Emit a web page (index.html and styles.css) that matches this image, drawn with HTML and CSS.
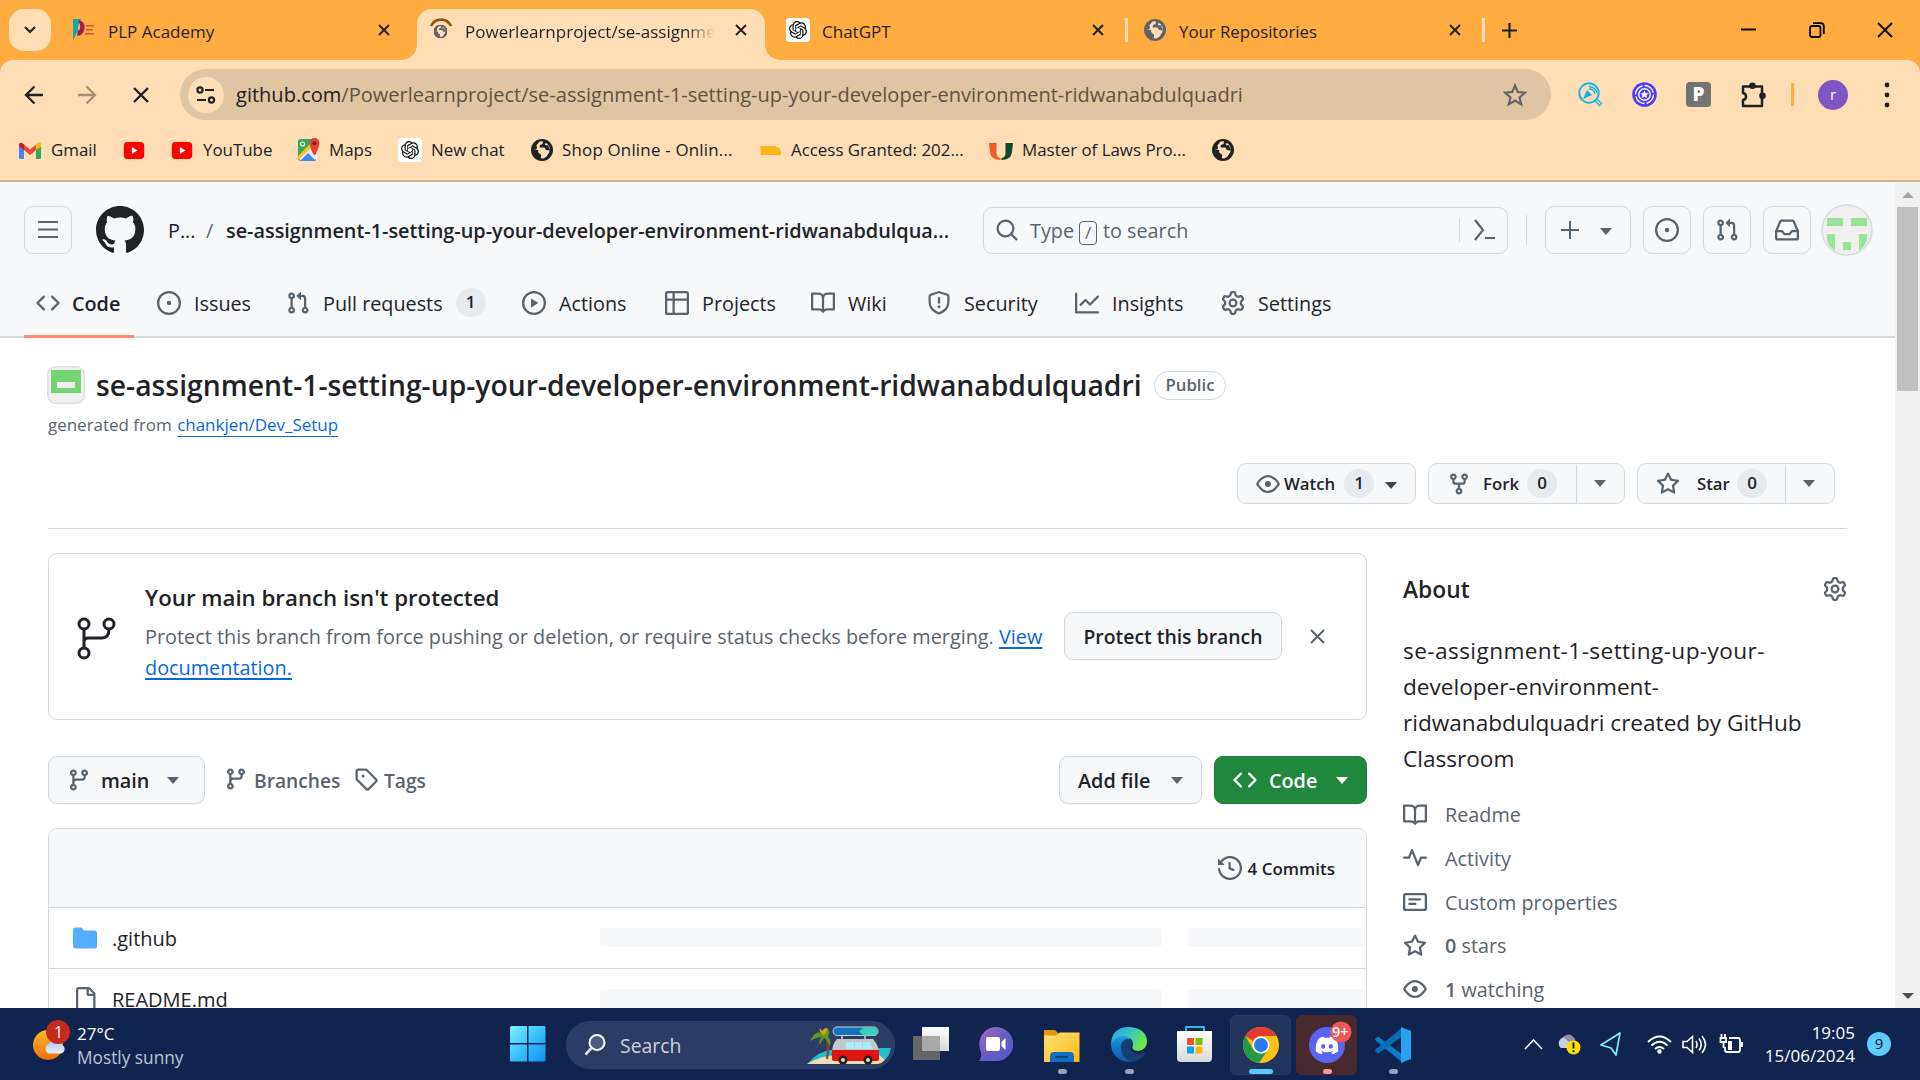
FILE: index.html
```html
<!DOCTYPE html>
<html lang="en">
<head>
<meta charset="utf-8">
<title>Powerlearnproject/se-assignment-1</title>
<link rel="stylesheet" href="styles.css">
</head>
<body>
<svg class="defs" aria-hidden="true">
  <defs>
    <linearGradient id="g-win" x1="0" y1="0" x2="1" y2="1"><stop offset="0" stop-color="#7df3fd"/><stop offset=".5" stop-color="#3cc1fb"/><stop offset="1" stop-color="#0d8ef5"/></linearGradient>
    <linearGradient id="g-sun" x1="0" y1="0" x2="0" y2="1"><stop offset="0" stop-color="#fbbc2a"/><stop offset="1" stop-color="#f06a0b"/></linearGradient>
    <linearGradient id="g-cloud" x1="0" y1="0" x2="0" y2="1"><stop offset="0" stop-color="#a9c5f2"/><stop offset="1" stop-color="#e4eefc"/></linearGradient>
    <linearGradient id="g-chat" x1="0" y1="0" x2="1" y2="1"><stop offset="0" stop-color="#a06ab8"/><stop offset=".5" stop-color="#6a5cc4"/><stop offset="1" stop-color="#5059c9"/></linearGradient>
    <linearGradient id="g-folder" x1="0" y1="0" x2="1" y2="1"><stop offset="0" stop-color="#ffe27a"/><stop offset="1" stop-color="#fdb913"/></linearGradient>
    <linearGradient id="g-edge" x1="0" y1="0" x2="1" y2=".4"><stop offset="0" stop-color="#2aa7e8"/><stop offset=".5" stop-color="#35c1c9"/><stop offset="1" stop-color="#6be94a"/></linearGradient>
    <linearGradient id="g-edge2" x1="0" y1="0" x2="0" y2="1"><stop offset="0" stop-color="#1b9de2"/><stop offset="1" stop-color="#0c56a5"/></linearGradient>
    <linearGradient id="g-bag" x1="0" y1="0" x2="0" y2="1"><stop offset="0" stop-color="#fff"/><stop offset="1" stop-color="#d8d8d8"/></linearGradient>
  </defs>
  <symbol id="i-code" viewBox="0 0 16 16"><path d="m11.28 3.22 4.25 4.25a.75.75 0 0 1 0 1.06l-4.25 4.25a.749.749 0 0 1-1.275-.326.749.749 0 0 1 .215-.734L13.94 8l-3.72-3.72a.749.749 0 0 1 .326-1.275.749.749 0 0 1 .734.215Zm-6.56 0a.751.751 0 0 1 1.042.018.751.751 0 0 1 .018 1.042L2.06 8l3.72 3.72a.749.749 0 0 1-.326 1.275.749.749 0 0 1-.734-.215L.47 8.53a.75.75 0 0 1 0-1.06Z"/></symbol>
  <symbol id="i-issue" viewBox="0 0 16 16"><path d="M8 9.5a1.5 1.5 0 1 0 0-3 1.5 1.5 0 0 0 0 3Z"/><path d="M8 0a8 8 0 1 1 0 16A8 8 0 0 1 8 0ZM1.5 8a6.5 6.5 0 1 0 13 0 6.5 6.5 0 0 0-13 0Z"/></symbol>
  <symbol id="i-pr" viewBox="0 0 16 16"><path d="M1.5 3.25a2.25 2.25 0 1 1 3 2.122v5.256a2.251 2.251 0 1 1-1.5 0V5.372A2.25 2.25 0 0 1 1.5 3.25Zm5.677-.177L9.573.677A.25.25 0 0 1 10 .854V2.5h1A2.5 2.5 0 0 1 13.5 5v5.628a2.251 2.251 0 1 1-1.5 0V5a1 1 0 0 0-1-1h-1v1.646a.25.25 0 0 1-.427.177L7.177 3.427a.25.25 0 0 1 0-.354ZM3.75 2.5a.75.75 0 1 0 0 1.5.75.75 0 0 0 0-1.5Zm0 9.5a.75.75 0 1 0 0 1.5.75.75 0 0 0 0-1.5Zm8.25.75a.75.75 0 1 0 1.5 0 .75.75 0 0 0-1.5 0Z"/></symbol>
  <symbol id="i-play" viewBox="0 0 16 16"><path d="M8 0a8 8 0 1 1 0 16A8 8 0 0 1 8 0ZM1.5 8a6.5 6.5 0 1 0 13 0 6.5 6.5 0 0 0-13 0Zm4.879-2.773 4.264 2.559a.25.25 0 0 1 0 .428l-4.264 2.559A.25.25 0 0 1 6 10.559V5.442a.25.25 0 0 1 .379-.215Z"/></symbol>
  <symbol id="i-table" viewBox="0 0 16 16"><path d="M0 1.75C0 .784.784 0 1.75 0h12.5C15.216 0 16 .784 16 1.75v12.5A1.75 1.75 0 0 1 14.25 16H1.75A1.75 1.75 0 0 1 0 14.25ZM6.5 6.5v8h7.75a.25.25 0 0 0 .25-.25V6.5Zm8-1.5V1.75a.25.25 0 0 0-.25-.25H6.5V5Zm-13 1.5v7.75c0 .138.112.25.25.25H5v-8ZM5 5V1.5H1.75a.25.25 0 0 0-.25.25V5Z"/></symbol>
  <symbol id="i-book" viewBox="0 0 16 16"><path d="M0 1.75A.75.75 0 0 1 .75 1h4.253c1.227 0 2.317.59 3 1.501A3.743 3.743 0 0 1 11.006 1h4.245a.75.75 0 0 1 .75.75v10.5a.75.75 0 0 1-.75.75h-4.507a2.25 2.25 0 0 0-1.591.659l-.622.621a.75.75 0 0 1-1.06 0l-.622-.621A2.25 2.25 0 0 0 5.258 13H.75a.75.75 0 0 1-.75-.75Zm7.251 10.324.004-5.073-.002-2.253A2.25 2.25 0 0 0 5.003 2.5H1.5v9h3.757a3.75 3.75 0 0 1 1.994.574ZM8.755 4.75l-.004 7.322a3.752 3.752 0 0 1 1.992-.572H14.5v-9h-3.495a2.25 2.25 0 0 0-2.25 2.25Z"/></symbol>
  <symbol id="i-shield" viewBox="0 0 16 16"><path d="M7.467.133a1.748 1.748 0 0 1 1.066 0l5.25 1.68A1.75 1.75 0 0 1 15 3.48V7c0 1.566-.32 3.182-1.303 4.682-.983 1.498-2.585 2.813-5.032 3.855a1.697 1.697 0 0 1-1.33 0c-2.447-1.042-4.049-2.357-5.032-3.855C1.32 10.182 1 8.566 1 7V3.48a1.755 1.755 0 0 1 1.217-1.667Zm.61 1.429a.25.25 0 0 0-.153 0l-5.25 1.68a.25.25 0 0 0-.174.238V7c0 1.358.275 2.666 1.057 3.86.784 1.194 2.121 2.34 4.366 3.297a.196.196 0 0 0 .154 0c2.245-.956 3.582-2.104 4.366-3.298C13.225 9.666 13.5 8.36 13.5 7V3.48a.251.251 0 0 0-.174-.237l-5.25-1.68ZM8.75 4.75v3a.75.75 0 0 1-1.5 0v-3a.75.75 0 0 1 1.5 0ZM9 10.5a1 1 0 1 1-2 0 1 1 0 0 1 2 0Z"/></symbol>
  <symbol id="i-graph" viewBox="0 0 16 16"><path d="M1.5 1.75V13.5h13.75a.75.75 0 0 1 0 1.5H.75a.75.75 0 0 1-.75-.75V1.75a.75.75 0 0 1 1.5 0Zm14.28 2.53-5.25 5.25a.75.75 0 0 1-1.06 0L7 7.06 4.28 9.78a.751.751 0 0 1-1.042-.018.751.751 0 0 1-.018-1.042l3.25-3.25a.75.75 0 0 1 1.06 0L10 7.94l4.72-4.72a.751.751 0 0 1 1.042.018.751.751 0 0 1 .018 1.042Z"/></symbol>
  <symbol id="i-gear" viewBox="0 0 16 16"><path d="M8 0a8.2 8.2 0 0 1 .701.031C9.444.095 9.99.645 10.16 1.29l.288 1.107c.018.066.079.158.212.224.231.114.454.243.668.386.123.082.233.09.299.071l1.103-.303c.644-.176 1.392.021 1.82.63.27.385.506.792.704 1.218.315.675.111 1.422-.364 1.891l-.814.806c-.049.048-.098.147-.088.294.016.257.016.515 0 .772-.01.147.038.246.088.294l.814.806c.475.469.679 1.216.364 1.891a7.977 7.977 0 0 1-.704 1.217c-.428.61-1.176.807-1.82.63l-1.102-.302c-.067-.019-.177-.011-.3.071a5.909 5.909 0 0 1-.668.386c-.133.066-.194.158-.211.224l-.29 1.106c-.168.646-.715 1.196-1.458 1.26a8.006 8.006 0 0 1-1.402 0c-.743-.064-1.289-.614-1.458-1.26l-.289-1.106c-.018-.066-.079-.158-.212-.224a5.738 5.738 0 0 1-.668-.386c-.123-.082-.233-.09-.299-.071l-1.103.303c-.644.176-1.392-.021-1.82-.63a8.12 8.12 0 0 1-.704-1.218c-.315-.675-.111-1.422.363-1.891l.815-.806c.05-.048.098-.147.088-.294a6.214 6.214 0 0 1 0-.772c.01-.147-.038-.246-.088-.294l-.815-.806C.635 6.045.431 5.298.746 4.623a7.92 7.92 0 0 1 .704-1.217c.428-.61 1.176-.807 1.82-.63l1.102.302c.067.019.177.011.3-.071.214-.143.437-.272.668-.386.133-.066.194-.158.211-.224l.29-1.106C6.009.645 6.556.095 7.299.03 7.53.01 7.764 0 8 0Zm-.571 1.525c-.036.003-.108.036-.137.146l-.289 1.105c-.147.561-.549.967-.998 1.189-.173.086-.34.183-.5.29-.417.278-.97.423-1.529.27l-1.103-.303c-.109-.03-.175.016-.195.045-.22.312-.412.644-.573.99-.014.031-.021.11.059.19l.815.806c.411.406.562.957.53 1.456a4.709 4.709 0 0 0 0 .582c.032.499-.119 1.05-.53 1.456l-.815.806c-.081.08-.073.159-.059.19.162.346.353.677.573.989.02.03.085.076.195.046l1.102-.303c.56-.153 1.113-.008 1.53.27.161.107.328.204.501.29.447.222.85.629.997 1.189l.289 1.105c.029.109.101.143.137.146a6.6 6.6 0 0 0 1.142 0c.036-.003.108-.036.137-.146l.289-1.105c.147-.561.549-.967.998-1.189.173-.086.34-.183.5-.29.417-.278.97-.423 1.529-.27l1.103.303c.109.029.175-.016.195-.045.22-.313.411-.644.573-.99.014-.031.021-.11-.059-.19l-.815-.806c-.411-.406-.562-.957-.53-1.456a4.709 4.709 0 0 0 0-.582c-.032-.499.119-1.05.53-1.456l.815-.806c.081-.08.073-.159.059-.19a6.464 6.464 0 0 0-.573-.989c-.02-.03-.085-.076-.195-.046l-1.102.303c-.56.153-1.113.008-1.53-.27a4.44 4.44 0 0 0-.501-.29c-.447-.222-.85-.629-.997-1.189l-.289-1.105c-.029-.11-.101-.143-.137-.146a6.6 6.6 0 0 0-1.142 0ZM11 8a3 3 0 1 1-6 0 3 3 0 0 1 6 0ZM9.5 8a1.5 1.5 0 1 0-3.001.001A1.5 1.5 0 0 0 9.5 8Z"/></symbol>
  <symbol id="i-fork" viewBox="0 0 16 16"><path d="M5 5.372v.878c0 .414.336.75.75.75h4.5a.75.75 0 0 0 .75-.75v-.878a2.25 2.25 0 1 1 1.5 0v.878a2.25 2.25 0 0 1-2.25 2.25h-1.5v2.128a2.251 2.251 0 1 1-1.5 0V8.5h-1.5A2.25 2.25 0 0 1 3.5 6.25v-.878a2.25 2.25 0 1 1 1.5 0ZM5 3.25a.75.75 0 1 0-1.5 0 .75.75 0 0 0 1.5 0Zm6.75.75a.75.75 0 1 0 0-1.5.75.75 0 0 0 0 1.5Zm-3 8.75a.75.75 0 1 0-1.5 0 .75.75 0 0 0 1.5 0Z"/></symbol>
  <symbol id="i-star" viewBox="0 0 16 16"><path d="M8 .25a.75.75 0 0 1 .673.418l1.882 3.815 4.21.612a.75.75 0 0 1 .416 1.279l-3.046 2.97.719 4.192a.751.751 0 0 1-1.088.791L8 12.347l-3.766 1.98a.75.75 0 0 1-1.088-.79l.72-4.194L.818 6.374a.75.75 0 0 1 .416-1.28l4.21-.611L7.327.668A.75.75 0 0 1 8 .25Zm0 2.445L6.615 5.5a.75.75 0 0 1-.564.41l-3.097.45 2.24 2.184a.75.75 0 0 1 .216.664l-.528 3.084 2.769-1.456a.75.75 0 0 1 .698 0l2.77 1.456-.53-3.084a.75.75 0 0 1 .216-.664l2.24-2.183-3.096-.45a.75.75 0 0 1-.564-.41L8 2.694Z"/></symbol>
  <symbol id="i-eye" viewBox="0 0 16 16"><path d="M8 2c1.981 0 3.671.992 4.933 2.078 1.27 1.091 2.187 2.345 2.637 3.023a1.62 1.62 0 0 1 0 1.798c-.45.678-1.367 1.932-2.637 3.023C11.67 13.008 9.981 14 8 14c-1.981 0-3.671-.992-4.933-2.078C1.797 10.83.88 9.576.43 8.898a1.62 1.62 0 0 1 0-1.798c.45-.677 1.367-1.931 2.637-3.022C4.33 2.992 6.019 2 8 2ZM1.679 7.932a.12.12 0 0 0 0 .136c.411.622 1.241 1.75 2.366 2.717C5.176 11.758 6.527 12.5 8 12.5c1.473 0 2.825-.742 3.955-1.715 1.124-.967 1.954-2.096 2.366-2.717a.12.12 0 0 0 0-.136c-.412-.621-1.242-1.75-2.366-2.717C10.824 4.242 9.473 3.5 8 3.5c-1.473 0-2.825.742-3.955 1.715-1.124.967-1.954 2.096-2.366 2.717ZM8 10a2 2 0 1 1-.001-3.999A2 2 0 0 1 8 10Z"/></symbol>
  <symbol id="i-branch" viewBox="0 0 16 16"><path d="M9.5 3.25a2.25 2.25 0 1 1 3 2.122V6A2.5 2.5 0 0 1 10 8.5H6a1 1 0 0 0-1 1v1.128a2.251 2.251 0 1 1-1.5 0V5.372a2.25 2.25 0 1 1 1.5 0v1.836A2.493 2.493 0 0 1 6 7h4a1 1 0 0 0 1-1v-.628A2.25 2.25 0 0 1 9.5 3.25Zm-6 0a.75.75 0 1 0 1.5 0 .75.75 0 0 0-1.5 0Zm8.25-.75a.75.75 0 1 0 0 1.5.75.75 0 0 0 0-1.5ZM4.25 12a.75.75 0 1 0 0 1.5.75.75 0 0 0 0-1.5Z"/></symbol>
  <symbol id="i-tag" viewBox="0 0 16 16"><path d="M1 7.775V2.75C1 1.784 1.784 1 2.75 1h5.025c.464 0 .91.184 1.238.513l6.25 6.25a1.75 1.75 0 0 1 0 2.474l-5.026 5.026a1.75 1.75 0 0 1-2.474 0l-6.25-6.25A1.752 1.752 0 0 1 1 7.775Zm1.5 0c0 .066.026.13.073.177l6.25 6.25a.25.25 0 0 0 .354 0l5.025-5.025a.25.25 0 0 0 0-.354l-6.25-6.25a.25.25 0 0 0-.177-.073H2.75a.25.25 0 0 0-.25.25ZM6 5a1 1 0 1 1 0 2 1 1 0 0 1 0-2Z"/></symbol>
  <symbol id="i-history" viewBox="0 0 16 16"><path d="m.427 1.927 1.215 1.215a8.002 8.002 0 1 1-1.6 5.685.75.75 0 1 1 1.493-.154 6.5 6.5 0 1 0 1.18-4.458l1.358 1.358A.25.25 0 0 1 3.896 6H.25A.25.25 0 0 1 0 5.75V2.104a.25.25 0 0 1 .427-.177ZM7.75 4a.75.75 0 0 1 .75.75v2.992l2.028.812a.75.75 0 0 1-.557 1.392l-2.5-1A.751.751 0 0 1 7 8.25v-3.5A.75.75 0 0 1 7.75 4Z"/></symbol>
  <symbol id="i-file" viewBox="0 0 16 16"><path d="M2 1.75C2 .784 2.784 0 3.75 0h6.586c.464 0 .909.184 1.237.513l2.914 2.914c.329.328.513.773.513 1.237v9.586A1.75 1.75 0 0 1 13.25 16h-9.5A1.75 1.75 0 0 1 2 14.25Zm1.75-.25a.25.25 0 0 0-.25.25v12.5c0 .138.112.25.25.25h9.5a.25.25 0 0 0 .25-.25V6h-2.75A1.75 1.75 0 0 1 9 4.25V1.5Zm6.75.062V4.25c0 .138.112.25.25.25h2.688l-.011-.013-2.914-2.914-.013-.011Z"/></symbol>
  <symbol id="i-folder" viewBox="0 0 16 16"><path d="M1.75 1A1.75 1.75 0 0 0 0 2.75v10.5C0 14.216.784 15 1.75 15h12.5A1.75 1.75 0 0 0 16 13.25v-8.5A1.75 1.75 0 0 0 14.25 3H7.5a.25.25 0 0 1-.2-.1l-.9-1.2C6.07 1.26 5.55 1 5 1H1.75Z"/></symbol>
  <symbol id="i-pulse" viewBox="0 0 16 16"><path d="M6 2c.306 0 .582.187.696.471L10 10.731l1.304-3.26A.751.751 0 0 1 12 7h3.25a.75.75 0 0 1 0 1.5h-2.742l-1.812 4.528a.751.751 0 0 1-1.392 0L6 4.77 4.696 8.03A.75.75 0 0 1 4 8.5H.75a.75.75 0 0 1 0-1.5h2.742l1.812-4.529A.751.751 0 0 1 6 2Z"/></symbol>
  <symbol id="i-note" viewBox="0 0 16 16"><path d="M0 3.75C0 2.784.784 2 1.75 2h12.5c.966 0 1.75.784 1.75 1.75v8.5A1.75 1.75 0 0 1 14.25 14H1.75A1.75 1.75 0 0 1 0 12.25Zm1.75-.25a.25.25 0 0 0-.25.25v8.5c0 .138.112.25.25.25h12.5a.25.25 0 0 0 .25-.25v-8.5a.25.25 0 0 0-.25-.25ZM3.5 6.25a.75.75 0 0 1 .75-.75h7a.75.75 0 0 1 0 1.5h-7a.75.75 0 0 1-.75-.75Zm.75 2.25h4a.75.75 0 0 1 0 1.5h-4a.75.75 0 0 1 0-1.5Z"/></symbol>
  <symbol id="i-inbox" viewBox="0 0 16 16"><path d="M2.8 2.06A1.75 1.75 0 0 1 4.41 1h7.18c.7 0 1.333.417 1.61 1.06l2.74 6.395c.04.093.06.194.06.295v4.5A1.75 1.75 0 0 1 14.25 15H1.75A1.75 1.75 0 0 1 0 13.25v-4.5c0-.101.02-.202.06-.295Zm1.61.44a.25.25 0 0 0-.23.152L1.887 8H4.75a.75.75 0 0 1 .6.3L6.625 10h2.75l1.275-1.7a.75.75 0 0 1 .6-.3h2.863L11.82 2.652a.25.25 0 0 0-.23-.152Zm10.09 7h-2.875l-1.275 1.7a.75.75 0 0 1-.6.3h-3.5a.75.75 0 0 1-.6-.3L4.375 9.5H1.5v3.75c0 .138.112.25.25.25h12.5a.25.25 0 0 0 .25-.25Z"/></symbol>
  <symbol id="i-search" viewBox="0 0 16 16"><path d="M10.68 11.74a6 6 0 0 1-7.922-8.982 6 6 0 0 1 8.982 7.922l3.04 3.04a.749.749 0 0 1-.326 1.275.749.749 0 0 1-.734-.215ZM11.5 7a4.499 4.499 0 1 0-8.997 0A4.499 4.499 0 0 0 11.5 7Z"/></symbol>
  <symbol id="i-github" viewBox="0 0 16 16"><path d="M8 0c4.42 0 8 3.58 8 8a8.013 8.013 0 0 1-5.45 7.59c-.4.08-.55-.17-.55-.38 0-.27.01-1.13.01-2.2 0-.75-.25-1.23-.54-1.48 1.78-.2 3.65-.88 3.65-3.95 0-.88-.31-1.59-.82-2.15.08-.2.36-1.02-.08-2.12 0 0-.67-.22-2.2.82-.64-.18-1.32-.27-2-.27-.68 0-1.36.09-2 .27-1.53-1.03-2.2-.82-2.2-.82-.44 1.1-.16 1.92-.08 2.12-.51.56-.82 1.28-.82 2.15 0 3.06 1.86 3.75 3.64 3.95-.23.2-.44.55-.51 1.07-.46.21-1.61.55-2.33-.66-.15-.24-.6-.83-1.23-.82-.67.01-.27.38.01.53.34.19.73.9.82 1.13.16.45.68 1.31 2.69.94 0 .67.01 1.3.01 1.49 0 .21-.15.45-.55.38A7.995 7.995 0 0 1 0 8c0-4.42 3.58-8 8-8Z"/></symbol>
  <symbol id="i-openai" viewBox="-4 -4 32 32"><rect x="-4" y="-4" width="32" height="32" rx="5" fill="#fff"/><path fill="#111" d="M22.2819 9.8211a5.9847 5.9847 0 0 0-.5157-4.9108 6.0462 6.0462 0 0 0-6.5098-2.9A6.0651 6.0651 0 0 0 4.9807 4.1818a5.9847 5.9847 0 0 0-3.9977 2.9 6.0462 6.0462 0 0 0 .7427 7.0966 5.98 5.98 0 0 0 .511 4.9107 6.051 6.051 0 0 0 6.5146 2.9001A5.9847 5.9847 0 0 0 13.2599 24a6.0557 6.0557 0 0 0 5.7718-4.2058 5.9894 5.9894 0 0 0 3.9977-2.9001 6.0557 6.0557 0 0 0-.7475-7.0729zm-9.022 12.6081a4.4755 4.4755 0 0 1-2.8764-1.0408l.1419-.0804 4.7783-2.7582a.7948.7948 0 0 0 .3927-.6813v-6.7369l2.02 1.1686a.071.071 0 0 1 .038.052v5.5826a4.504 4.504 0 0 1-4.4945 4.4944zm-9.6607-4.1254a4.4708 4.4708 0 0 1-.5346-3.0137l.142.0852 4.783 2.7582a.7712.7712 0 0 0 .7806 0l5.8428-3.3685v2.3324a.0804.0804 0 0 1-.0332.0615L9.74 19.9502a4.4992 4.4992 0 0 1-6.1408-1.6464zM2.3408 7.8956a4.485 4.485 0 0 1 2.3655-1.9728V11.6a.7664.7664 0 0 0 .3879.6765l5.8144 3.3543-2.0201 1.1685a.0757.0757 0 0 1-.071 0l-4.8303-2.7865A4.504 4.504 0 0 1 2.3408 7.872zm16.5963 3.8558L13.1038 8.364 15.1192 7.2a.0757.0757 0 0 1 .071 0l4.8303 2.7913a4.4944 4.4944 0 0 1-.6765 8.1042v-5.6772a.79.79 0 0 0-.407-.667zm2.0107-3.0231l-.142-.0852-4.7735-2.7818a.7759.7759 0 0 0-.7854 0L9.409 9.2297V6.8974a.0662.0662 0 0 1 .0284-.0615l4.8303-2.7866a4.4992 4.4992 0 0 1 6.6802 4.66zM8.3065 12.863l-2.02-1.1638a.0804.0804 0 0 1-.038-.0567V6.0742a4.4992 4.4992 0 0 1 7.3757-3.4537l-.142.0805L8.704 5.459a.7948.7948 0 0 0-.3927.6813zm1.0976-2.3654l2.602-1.4998 2.6069 1.4998v2.9994l-2.5974 1.4997-2.6067-1.4997Z"/></symbol>
  <symbol id="i-globe" viewBox="0 0 22 22"><circle cx="11" cy="11" r="11"/><path class="land" d="M8.5 2.6 12 2.2 11.6 5 9 6l-.5 2.6h5L15 11l3.8.4c.2-3-1-5.6-3.2-7.2l-2 .4.8 1.6h2.6l1.6 4.2-.3 2.8-3 4.6-3 1.8-2.5-.4.4-3.4-3-2.2V11H2.4l3-.6L6 8.600 5.400 6.400Z"/></symbol>
  <symbol id="i-x" viewBox="0 0 12 12"><path d="M1 1l10 10M11 1L1 11" fill="none" stroke="currentColor" stroke-width="1.9"/></symbol>
  <symbol id="i-youtube" viewBox="0 0 24 20"><rect width="24" height="20" rx="4.500" fill="#f00"/><path d="M9.500 6v8l6.500-4z" fill="#fff"/></symbol>
</svg>

<header class="tabstrip">
  <button class="tab-search"><svg width="14" height="10" viewBox="0 0 14 10"><path d="M2 2l5 5 5-5" fill="none" stroke="#202124" stroke-width="2.200"/></svg></button>
  <div class="tab tab-plp">
    <svg class="fav" width="22" height="22" viewBox="0 0 22 22"><path d="M0 0h8L5 8v4L0 21z" fill="#14a8ad"/><path d="M5 1q7 1 6.500 8T4 17l1-5 2-2q1-4-2-9z" fill="#a3174f"/><path d="M13 6h8v1.500h-8zM13 10h7v1.500h-7zM12 14h9v1.500h-9z" fill="#d9503a"/></svg>
    <span class="label">PLP Academy</span><svg class="close"><use href="#i-x"/></svg>
  </div>
  <div class="tab tab-active">
    <svg class="fav" width="24" height="24" viewBox="0 0 24 24"><path d="M2 8a11 11 0 0 1 20 0" fill="none" stroke="#8a5710" stroke-width="2.600"/><svg class="globe-tab" x="4.500" y="6.500" width="14" height="14"><use href="#i-globe"/></svg></svg>
    <span class="label fade">Powerlearnproject/se-assignmen</span><svg class="close"><use href="#i-x"/></svg>
  </div>
  <div class="tab tab-gpt">
    <svg class="fav" width="24" height="24"><use href="#i-openai"/></svg>
    <span class="label">ChatGPT</span><svg class="close"><use href="#i-x"/></svg>
  </div>
  <i class="tab-sep"></i>
  <div class="tab tab-repos">
    <svg class="fav globe-grey" width="22" height="22"><use href="#i-globe"/></svg>
    <span class="label">Your Repositories</span><svg class="close"><use href="#i-x"/></svg>
  </div>
  <i class="tab-sep"></i>
  <svg class="new-tab" width="17" height="17" viewBox="0 0 17 17"><path d="M8.500 1v15M1 8.500h15" stroke="#202124" stroke-width="2.200"/></svg>
  <div class="win-ctrl">
    <svg width="16" height="16" viewBox="0 0 16 16"><path d="M0 7.500h15" stroke="#000" stroke-width="2"/></svg>
    <svg width="16" height="16" viewBox="0 0 16 16"><g fill="none" stroke="#000" stroke-width="1.800"><rect x="1" y="4" width="10.500" height="11" rx="2"/><path d="M4 1.200h7.500q3.300 0 3.300 3.300V12"/></g></svg>
    <svg width="16" height="16" viewBox="0 0 16 16"><path d="M1 1l14 14M15 1L1 15" stroke="#000" stroke-width="1.800"/></svg>
  </div>
</header>

<section class="chrome">
  <div class="toolbar">
    <svg width="20" height="20" viewBox="0 0 20 20"><path d="M19 10H2M10.500 1.500L2 10l8.500 8.500" fill="none" stroke="#202124" stroke-width="2.300"/></svg>
    <svg width="20" height="20" viewBox="0 0 20 20"><path d="M1 10h17M9.500 1.500L18 10l-8.500 8.500" fill="none" stroke="#a38f76" stroke-width="2.300"/></svg>
    <svg width="16" height="16" viewBox="0 0 16 16"><path d="M1 1l14 14M15 1L1 15" stroke="#202124" stroke-width="2.400"/></svg>
    <div class="omnibox">
      <span class="site-info"><svg width="20" height="18" viewBox="0 0 20 18"><g fill="none" stroke="#202124" stroke-width="2.200"><circle cx="4" cy="4" r="2.600"/><path d="M9 4h9M1 14h9"/><circle cx="15.500" cy="14" r="2.600"/></g></svg></span>
      <span class="url"><b>github.com</b>/Powerlearnproject/se-assignment-1-setting-up-your-developer-environment-ridwanabdulquadri</span>
      <svg width="24" height="24" viewBox="0 0 24 24"><path d="M12 2.500l2.800 6.600 7.200.6-5.500 4.700 1.700 7L12 17.600l-6.200 3.800 1.700-7L2 9.700l7.200-.6z" fill="none" stroke="#5f6368" stroke-width="2.100"/></svg>
    </div>
    <svg width="25" height="25" viewBox="0 0 25 25"><g fill="none" stroke="#17b7ee" stroke-width="2"><circle cx="11" cy="11" r="9.700"/><path d="M18 18l5 5" stroke-width="4"/><path d="M11 7q5 0 6 5M11 4.500q6 .5 8 6" stroke-width="1.300"/></g><path d="M9 8l5 5-9 4z" fill="#17a9e8"/><path d="M18.500 18.500l4 4" stroke="#ffdeb5" stroke-width="1.300"/></svg>
    <svg width="25" height="25" viewBox="0 0 25 25"><circle cx="12.500" cy="12.500" r="12.300" fill="#4d3dfb"/><g fill="none" stroke="#fff" stroke-width="1.400"><circle cx="12.500" cy="12.500" r="9" stroke-dasharray="12 2.100"/><circle cx="12.500" cy="12.500" r="5.800"/></g><path d="M12.500 8.500l1.200 2.600 2.800.3-2 1.900.6 2.700-2.600-1.300-2.600 1.300.6-2.700-2-1.900 2.800-.3z" fill="#fff"/></svg>
    <span class="ext-p">P</span>
    <svg width="26" height="26" viewBox="0 0 26 26"><path d="M2 4.500h19v19.500H2v-6q3-.5 3-3.500t-3-3.500z" fill="none" stroke="#202124" stroke-width="2.500" stroke-linejoin="round"/><circle cx="11.500" cy="3.800" r="3.300" fill="#202124"/><circle cx="21.500" cy="13.800" r="3.300" fill="#202124"/></svg>
    <i class="ext-sep"></i>
    <span class="profile">r</span>
    <svg width="6" height="26" viewBox="0 0 6 26"><g fill="#202124"><circle cx="3" cy="3" r="2.400"/><circle cx="3" cy="13" r="2.400"/><circle cx="3" cy="23" r="2.400"/></g></svg>
  </div>
  <nav class="bookmarks">
    <svg width="22" height="17" viewBox="0 0 22 17"><path d="M0 3v12.500Q0 17 1.500 17H5V7z" fill="#4285f4"/><path d="M22 3v12.500q0 1.500-1.500 1.500H17V7z" fill="#34a853"/><path d="M0 3.500Q0 0 3 1l8 6.500L19 1q3-1 3 2.500L17 8l-6 5-6-5z" fill="#ea4335"/><path d="M17 2.500L19 1q3-1 3 2.500v1.200L17 8z" fill="#fbbc04"/><path d="M0 3.500Q0 0 3 1l2 1.600V8L0 4z" fill="#c5221f"/></svg><span class="label">Gmail</span>
    <svg width="24" height="17"><use href="#i-youtube"/></svg>
    <svg width="24" height="17"><use href="#i-youtube"/></svg><span class="label">YouTube</span>
    <svg width="23" height="24" viewBox="0 0 23 24"><path d="M1 4q0-3 3-3h15v19q0 3-3 3H4q-3 0-3-3z" fill="#34a853"/><path d="M1 19L18 4l2 4v12L16 23H4z" fill="#f1f1ee"/><path d="M3 23l8-8 8 8z" fill="#4285f4"/><path d="M1 18L15 4l3 2.500L1.500 22z" fill="#fbc02d"/><path d="M17.500 0a5 5 0 0 1 5 5q0 3.500-4.200 12h-1.500Q12.500 9 12.500 5a5 5 0 0 1 5-5z" fill="#e04434"/><circle cx="17.500" cy="5.200" r="2" fill="#7d1a13"/><circle cx="5.500" cy="6" r="2" fill="none" stroke="#fff" stroke-width="1.200"/></svg><span class="label">Maps</span>
    <svg width="24" height="24"><use href="#i-openai"/></svg><span class="label">New chat</span>
    <svg class="globe-dark" width="22" height="22"><use href="#i-globe"/></svg><span class="label ls1">Shop Online - Onlin...</span>
    <svg width="21" height="9" viewBox="0 0 21 9"><path d="M0 0h14q6 1 7 5v4H1z" fill="#fbb61a"/></svg><span class="label">Access Granted: 202...</span>
    <svg class="u-logo" width="24" height="17" viewBox="0 0 24 17"><path d="M0 0h7.500v10q0 4.500 4 5V17Q2 17 1 9z" fill="#f05a28"/><path d="M24 0h-7.500v10q0 4.500-4 5V17Q22 17 23 9z" fill="#0b4a2e"/></svg><span class="label">Master of Laws Pro...</span>
    <svg class="globe-dark" width="22" height="22"><use href="#i-globe"/></svg>
  </nav>
</section>

<div class="viewport">
  <main class="page">
    <div class="gh-head">
      <div class="gh-top">
        <button class="sq"><svg width="22" height="22" viewBox="0 0 22 22"><path d="M1 3h20M1 10.500h20M1 18h20" stroke="#59636e" stroke-width="2"/></svg></button>
        <svg class="mark" width="48" height="48"><use href="#i-github"/></svg>
        <span class="label">P...</span><span class="label slash">/</span>
        <strong class="label crumb">se-assignment-1-setting-up-your-developer-environment-ridwanabdulqua...</strong>
        <div class="gh-search">
          <svg class="oct" width="24" height="24"><use href="#i-search"/></svg>
          <span class="label">Type</span><kbd>/</kbd><span class="label">to search</span>
          <span class="cmd"><svg width="21" height="22" viewBox="0 0 21 22"><path d="M1 1l8 10-8 10M11 19h10" fill="none" stroke="#59636e" stroke-width="2.200"/></svg></span>
        </div>
        <i class="gh-sep"></i>
        <button class="sq plus"><svg width="18" height="18" viewBox="0 0 18 18"><path d="M9 0v18M0 9h18" stroke="#59636e" stroke-width="2"/></svg><i class="caret"></i></button>
        <button class="sq"><svg class="oct" width="24" height="24"><use href="#i-issue"/></svg></button>
        <button class="sq"><svg class="oct" width="24" height="24"><use href="#i-pr"/></svg></button>
        <button class="sq"><svg class="oct" width="24" height="24"><use href="#i-inbox"/></svg></button>
        <svg class="avatar" width="52" height="52" viewBox="0 0 52 52"><circle cx="26" cy="26" r="25" fill="#f0f0f0" stroke="#d8dadc" stroke-width="1.500"/><path d="M6 14h16v8H6zM30 14h16v8H30zM6 30h8v16h-1q-7-6-7-10zM38 30h8v6q-2 6-7 10h-1zM22 38h8v8h-8z" fill="#9be29b"/></svg>
      </div>
      <nav class="gh-nav">
        <a class="current"><svg class="oct"><use href="#i-code"/></svg><span class="label">Code</span></a>
        <a><svg class="oct"><use href="#i-issue"/></svg><span class="label">Issues</span></a>
        <a><svg class="oct"><use href="#i-pr"/></svg><span class="label">Pull requests</span><span class="count">1</span></a>
        <a><svg class="oct"><use href="#i-play"/></svg><span class="label">Actions</span></a>
        <a><svg class="oct"><use href="#i-table"/></svg><span class="label">Projects</span></a>
        <a><svg class="oct"><use href="#i-book"/></svg><span class="label">Wiki</span></a>
        <a><svg class="oct"><use href="#i-shield"/></svg><span class="label">Security</span></a>
        <a><svg class="oct"><use href="#i-graph"/></svg><span class="label">Insights</span></a>
        <a><svg class="oct"><use href="#i-gear"/></svg><span class="label">Settings</span></a>
      </nav>
    </div>

    <div class="title-row">
      <svg width="38" height="38" viewBox="0 0 38 38"><rect x=".75" y=".75" width="36.500" height="36.500" rx="8" fill="#f0f0f0" stroke="#dcdee0" stroke-width="1.500"/><path d="M4 4h30v23H4zM10 16v6h18v-6z" fill="#75d575" fill-rule="evenodd"/></svg>
      <h1>se-assignment-1-setting-up-your-developer-environment-ridwanabdulquadri</h1>
      <span class="pill">Public</span>
    </div>
    <p class="generated">generated from <a>chankjen/Dev_Setup</a></p>

    <div class="actions">
      <button class="btn watch"><svg class="oct" width="24" height="24"><use href="#i-eye"/></svg><span class="label">Watch</span><span class="count">1</span><i class="caret dark"></i></button>
      <div class="btn split"><span class="main"><svg class="oct" width="24" height="24"><use href="#i-fork"/></svg><span class="label">Fork</span><span class="count">0</span></span><span class="drop"><i class="caret"></i></span></div>
      <div class="btn split star"><span class="main"><svg class="oct" width="24" height="24"><use href="#i-star"/></svg><span class="label">Star</span><span class="count">0</span></span><span class="drop"><i class="caret"></i></span></div>
    </div>

    <div class="columns">
      <section class="left">
        <div class="alert">
          <svg class="big-branch" width="48" height="48" viewBox="0 0 48 48"><g fill="none" stroke="#1f2328" stroke-width="3"><circle cx="12" cy="9" r="5"/><circle cx="37" cy="9" r="5"/><circle cx="12" cy="38" r="5"/><path d="M12 14v19M12 27q0-4 4-4h14q7 0 7-9"/></g></svg>
          <div class="alert-text">
            <h2>Your main branch isn't protected</h2>
            <p>Protect this branch from force pushing or deletion, or require status checks before merging. <a>View documentation.</a></p>
          </div>
          <button class="btn protect">Protect this branch</button>
          <svg class="dismiss" width="15" height="15" viewBox="0 0 15 15"><path d="M1 1l13 13M14 1L1 14" stroke="#59636e" stroke-width="2"/></svg>
        </div>
        <div class="branch-row">
          <button class="btn main-btn"><svg class="oct" width="24" height="24"><use href="#i-branch"/></svg><span>main</span><i class="caret"></i></button>
          <a class="meta br"><svg class="oct" width="24" height="24"><use href="#i-branch"/></svg><span class="label">Branches</span></a>
          <a class="meta"><svg class="oct" width="24" height="24"><use href="#i-tag"/></svg><span class="label">Tags</span></a>
          <button class="btn add"><span>Add file</span><i class="caret"></i></button>
          <button class="btn code"><svg class="oct" width="24" height="24"><use href="#i-code"/></svg><span>Code</span><i class="caret"></i></button>
        </div>
        <div class="files">
          <div class="files-head"><svg class="oct" width="24" height="24"><use href="#i-history"/></svg><span>4 Commits</span></div>
          <div class="file"><svg class="folder" width="24" height="24"><use href="#i-folder"/></svg><span class="label">.github</span><i class="skel"></i><i class="skel"></i></div>
          <div class="file"><svg class="oct" width="24" height="24"><use href="#i-file"/></svg><span class="label">README.md</span><i class="skel"></i><i class="skel"></i></div>
        </div>
      </section>
      <aside class="about">
        <div class="about-head"><h2>About</h2><svg class="oct" width="24" height="24"><use href="#i-gear"/></svg></div>
        <p class="desc"><span class="ls1">se-assignment-1-setting-up-your-</span><br>developer-environment-<br>ridwanabdulquadri created by GitHub<br>Classroom</p>
        <ul>
          <li><svg class="oct"><use href="#i-book"/></svg><span>Readme</span></li>
          <li><svg class="oct"><use href="#i-pulse"/></svg><span>Activity</span></li>
          <li><svg class="oct"><use href="#i-note"/></svg><span>Custom properties</span></li>
          <li><svg class="oct"><use href="#i-star"/></svg><span><b>0</b> stars</span></li>
          <li><svg class="oct"><use href="#i-eye"/></svg><span><b>1</b> watching</span></li>
        </ul>
      </aside>
    </div>
  </main>
  <div class="scrollbar"><i class="up"></i><i class="thumb"></i><i class="down"></i></div>
</div>

<footer class="taskbar">
  <svg width="40" height="44" viewBox="0 0 40 44"><circle cx="16" cy="25" r="15" fill="url(#g-sun)"/><path d="M17 33.500a5 5 0 0 1 0-9.500 7 7 0 0 1 13 1 4.500 4.500 0 0 1-1 8.500z" fill="url(#g-cloud)"/><circle cx="26" cy="12" r="12" fill="#c42b1c"/><text x="22" y="17.500" fill="#fff" class="badge-text">1</text></svg>
  <div class="weather"><span>27°C</span><span>Mostly sunny</span></div>
  <svg width="36" height="36" viewBox="0 0 36 36"><path d="M0 1.500Q0 0 1.500 0H17v17H0zM18.500 0H34q1.500 0 1.500 1.500V17h-17zM0 18.500h17v17H1.500Q0 35.500 0 34zM18.500 18.500h17V34q0 1.500-1.500 1.500H18.500z" fill="url(#g-win)"/></svg>
  <div class="tb-search">
    <svg width="22" height="22" viewBox="0 0 22 22"><circle cx="13" cy="8.500" r="7.500" fill="#4a5a82" stroke="#fff" stroke-width="2"/><path d="M7.500 14L1.500 20.500" stroke="#e0e3ea" stroke-width="2.600"/></svg>
    <span class="label">Search</span>
    <svg width="86" height="40" viewBox="0 0 86 40"><path d="M0 38Q14 23 26 24l-4 12z" fill="#21bcd0"/><path d="M68 22h16q-2 10-8 13l-8-4z" fill="#21bcd0"/><path d="M0 38q14-9 34-9h38l6 5q-3 3-7 4z" fill="#f0dcb4"/><path d="M17 8q6 10 3 25" fill="none" stroke="#7a4a21" stroke-width="2.200"/><path d="M16 8Q9 3 3 15q7-4 12-4-4 3-2 8 2-6 5-7 4 4 4 9 3-6-1-10 3-6-1-9-2 1-4 6z" fill="#5f9a21"/><path d="M13 2q-2 4 4 7 4-5 3-7-3 0-5 3z" fill="#e0a01f"/><rect x="26" y="1" width="45" height="8.500" rx="4.200" fill="#1273bd" stroke="#c9d4de"/><path d="M52 5.500L57 1h9q5 2 5 4.500T66 9.500h-9z" fill="#3bcdbd"/><path d="M35 10v4M58 10v4" stroke="#ccc" stroke-width="1.500"/><path d="M30 13h36q6 7 6 14H25q0-9 5-14z" fill="#c3c7cc"/><path d="M39 16h8v7h-8zM48 16h7v7h-7zM56 16h7l3 7H56z" fill="#a8ecfc"/><path d="M25 24h47v9q0 2-2 2H27q-2 0-2-2z" fill="#e11313"/><circle cx="36" cy="34" r="4.500" fill="#222"/><circle cx="61" cy="34" r="4.500" fill="#222"/><circle cx="36" cy="34" r="2" fill="#ddd"/><circle cx="61" cy="34" r="2" fill="#ddd"/></svg>
  </div>
  <svg width="36" height="34" viewBox="0 0 36 34"><rect x="9" width="27" height="24" fill="url(#g-bag)"/><rect y="9" width="27" height="24" fill="#666"/><rect x="9" y="9" width="18" height="15" fill="#a9a9a9"/></svg>
  <svg width="34" height="34" viewBox="0 0 34 34"><path d="M0 34q4-5 1-12A17 17 0 1 1 17 34z" fill="url(#g-chat)"/><rect x="7" y="10" width="14" height="14" rx="2" fill="#fff"/><path d="M22.500 15l4-4v12l-4-4z" fill="#fff"/></svg>
  <div class="app run"><svg width="36" height="34" viewBox="0 0 36 34"><path d="M0 2h11l4 4v7H0z" fill="#e09a0b"/><path d="M0 7.500h12L16 4.500h19.500V34H0z" fill="url(#g-folder)"/><path d="M6 34v-6q0-4 4-4h16q4 0 4 4v6z" fill="#0f6fc0"/><path d="M11 29h13" stroke="#0a4578" stroke-width="2"/></svg></div>
  <div class="app run"><svg width="36" height="36" viewBox="0 0 36 36"><path d="M0 17a18 18 0 0 0 33 10q-7 4-13 0-6-5-3-12 1-4 5-6Q4 4 0 17z" fill="url(#g-edge2)"/><path d="M0 17Q1 0 18 0q17 1 18 14 0 9-9 10-8-1-5-6Q22 10 13 9 4 9 0 17z" fill="url(#g-edge)"/><path d="M10 18q1-5 6-6 5 0 6 4-5 6 1 10 5 2 10 0 2 0 1 1-7 10-17 6-8-5-7-15z" fill="#123e72"/></svg></div>
  <svg width="36" height="36" viewBox="0 0 36 36"><path d="M9 6V1h18v5" fill="none" stroke="#29b6ea" stroke-width="2"/><path d="M0 5h35v27q0 4-4 4H4q-4 0-4-4z" fill="url(#g-bag)"/><path d="M10 12h7v7h-7z" fill="#f25022"/><path d="M18.500 12h7v7h-7z" fill="#7fba00"/><path d="M10 20.500h7v7h-7z" fill="#00a4ef"/><path d="M18.500 20.500h7v7h-7z" fill="#ffb900"/></svg>
  <div class="app tile active"><svg width="36" height="36" viewBox="0 0 36 36"><circle cx="18" cy="18" r="18" fill="#fbc116"/><path d="M2.400 9A18 18 0 0 1 33.600 9H18a9 9 0 0 0-8 5z" fill="#e33b2e"/><path d="M2.400 9A18 18 0 0 0 16 35.900L25.500 22a9 9 0 0 1-15.300.5z" fill="#249a49"/><circle cx="18" cy="18" r="8.600" fill="#fff"/><circle cx="18" cy="18" r="6.900" fill="#2a7bee"/></svg></div>
  <div class="app tile alerting"><svg width="48" height="48" viewBox="0 0 48 48"><circle cx="18" cy="30" r="18" fill="#5865f2"/><svg x="6.500" y="19" width="23" height="23" viewBox="0 0 24 24"><path fill="#fff" d="M20.317 4.3698a19.7913 19.7913 0 00-4.8851-1.5152.0741.0741 0 00-.0785.0371c-.211.3753-.4447.8648-.6083 1.2495-1.8447-.2762-3.68-.2762-5.4868 0-.1636-.3933-.4058-.8742-.6177-1.2495a.077.077 0 00-.0785-.037 19.7363 19.7363 0 00-4.8852 1.515.0699.0699 0 00-.0321.0277C.5334 9.0458-.319 13.5799.0992 18.0578a.0824.0824 0 00.0312.0561c2.0528 1.5076 4.0413 2.4228 5.9929 3.0294a.0777.0777 0 00.0842-.0276c.4616-.6304.8731-1.2952 1.226-1.9942a.076.076 0 00-.0416-.1057c-.6528-.2476-1.2743-.5495-1.8722-.8923a.077.077 0 01-.0076-.1277c.1258-.0943.2517-.1923.3718-.2914a.0743.0743 0 01.0776-.0105c3.9278 1.7933 8.18 1.7933 12.0614 0a.0739.0739 0 01.0785.0095c.1202.099.246.1981.3728.2924a.077.077 0 01-.0066.1276 12.2986 12.2986 0 01-1.873.8914.0766.0766 0 00-.0407.1067c.3604.698.7719 1.3628 1.225 1.9932a.076.076 0 00.0842.0286c1.961-.6067 3.9495-1.5219 6.0023-3.0294a.077.077 0 00.0313-.0552c.5004-5.177-.8382-9.6739-3.5485-13.6604a.061.061 0 00-.0312-.0286zM8.02 15.3312c-1.1825 0-2.1569-1.0857-2.1569-2.419 0-1.3332.9555-2.4189 2.157-2.4189 1.2108 0 2.1757 1.0952 2.1568 2.419 0 1.3332-.9555 2.4189-2.1569 2.4189zm7.9748 0c-1.1825 0-2.1569-1.0857-2.1569-2.419 0-1.3332.9554-2.4189 2.1569-2.4189 1.2108 0 2.1757 1.0952 2.1568 2.419 0 1.3332-.946 2.4189-2.1568 2.4189Z"/></svg><circle cx="32" cy="17" r="10.500" fill="#ed5757"/><text x="23" y="22" fill="#fff" class="badge-small">9+</text></svg></div>
  <div class="app run"><svg width="36" height="36" viewBox="0 0 36 36"><path d="M0 12l3-2.500L28 28v8L1 14z" fill="#0a7cc4"/><path d="M0 24l3 2.500L28 9V0L1 22z" fill="#0a6cb5"/><path d="M26 0l10 4v28l-10 4z" fill="#27a3ef"/></svg></div>
  <div class="tray">
    <svg width="19" height="11" viewBox="0 0 19 11"><path d="M1 10l8.500-9 8.500 9" fill="none" stroke="#fff" stroke-width="1.500"/></svg>
    <svg width="26" height="22" viewBox="0 0 26 22"><path d="M4 15a6 6 0 0 1 1-10 8 8 0 0 1 13 2l1 8z" fill="#c9ced8"/><path d="M6 4q7-6 12 2l1 5-6-1z" fill="#8b94a8"/><circle cx="16.500" cy="14.500" r="7" fill="#fde006"/><path d="M16.500 9.500v6M16.500 17.300v2" stroke="#111" stroke-width="1.900"/></svg>
    <svg width="23" height="24" viewBox="0 0 23 24"><path d="M21 1L2 13l10 3 5 7z" fill="none" stroke="#7ff0fb" stroke-width="1.700" stroke-linejoin="round"/></svg>
    <svg width="25" height="19" viewBox="0 0 25 19"><g fill="none" stroke="#fff" stroke-width="1.900"><path d="M1 7q11.500-11 23 0M4.500 10.500q8-7.500 16 0M8 14q4.500-4 9 0"/></g><circle cx="12.500" cy="16.500" r="2.200" fill="#fff"/></svg>
    <svg width="25" height="21" viewBox="0 0 25 21"><g fill="none" stroke="#fff" stroke-width="1.600"><path d="M1 7.500v6h4l5.500 5V2.500l-5.500 5z"/><path d="M14 7q2 3.500 0 7M17 4.500q4.500 6 0 12M20 2q7 8.500 0 17"/></g></svg>
    <svg width="24" height="20" viewBox="0 0 24 20"><g fill="none" stroke="#fff" stroke-width="1.800"><path d="M10 4h9q2 0 2 2v10q0 2-2 2H8q-2 0-2-2v-3M2.500 0v4M6 0v4M1.500 4h5.500v4H1.500zM4.500 8v6"/></g><path d="M9 7h4v9H9zM22 8h2v5h-2z" fill="#fff"/></svg>
  </div>
  <div class="clock"><span>19:05</span><span>15/06/2024</span></div>
  <span class="notif">9</span>
</footer>
</body>
</html>
```
FILE: styles.css
```css
* { box-sizing: border-box; }
body { margin: 0; width: 1920px; height: 1080px; overflow: hidden; display: flex; flex-direction: column; background: #ffac40; font: 19.8px/1.5 "Open Sans", "Noto Sans", sans-serif; color: #1f2328; }
h1, h2, p, ul { margin: 0; padding: 0; font-weight: 400; }
button { font: inherit; color: inherit; padding: 0; }
svg { display: block; flex: none; }
.defs { position: absolute; width: 0; height: 0; }
.label { white-space: nowrap; }
.ls1 { letter-spacing: .2px; }
.oct { width: 24px; height: 24px; fill: #59636e; }
.land { fill: #ffdeb5; }

/* tab strip */
.tabstrip { height: 60px; flex: none; display: grid; grid-template-columns: 64px 344px 369px 339px 19px 338px 19px 240px 1fr; padding-left: 9px; align-items: center; font-size: 17px; }
.tab-search { width: 42px; height: 42px; border: 0; border-radius: 15px; background: #ffdeb5; display: grid; place-items: center; }
.tab { height: 60px; display: grid; align-items: center; grid-template-columns: 35px 270px 12px; }
.tab .label { padding-top: 3px; }
.tab .close { width: 12px; height: 12px; color: #202124; }
.tab-active { grid-template-columns: 36px 270px 12px; margin-top: 9px; height: 51px; width: 348px; padding: 0 0 9px 12px; background: #ffdeb5; border-radius: 15px 15px 0 0; position: relative; }
.tab-active::before, .tab-active::after { content: ""; position: absolute; bottom: 0; width: 15px; height: 15px; }
.tab-active::before { left: -15px; background: radial-gradient(circle at 0 0, #ffac40 14.5px, #ffdeb5 15px); }
.tab-active::after { right: -15px; background: radial-gradient(circle at 100% 0, #ffac40 14.5px, #ffdeb5 15px); }
.fade { width: 250px; overflow: hidden; -webkit-mask-image: linear-gradient(90deg, #000 220px, transparent 250px); mask-image: linear-gradient(90deg, #000 220px, transparent 250px); }
.tab-gpt { grid-template-columns: 36px 270px 12px; }
.tab-repos { font-size: 16.8px; }
.tab-sep { width: 3px; height: 24px; background: #ffdeb5; }
.globe-grey, .globe-tab { fill: #5f6368; }
.globe-dark { fill: #202124; }
.win-ctrl { display: flex; gap: 52px; }

/* toolbar */
.chrome { height: 122px; flex: none; background: #ffdeb5; border-radius: 13px 13px 0 0; border-bottom: 2px solid #ccb191; }
.toolbar { height: 69px; display: grid; align-items: center; padding-left: 24px; grid-template-columns: 53px 56px 47px 1398px 54px 54px 55px 50px 27px 66px 6px; }
.omnibox { height: 51px; width: 1371px; border-radius: 26px; background: #dfc5a2; display: grid; grid-template-columns: 48px 1267px 24px; align-items: center; padding-left: 8px; }
.site-info { width: 36px; height: 36px; border-radius: 50%; background: #ffdeb5; display: grid; place-items: center; }
.url { font-size: 20.04px; white-space: nowrap; color: #5d5346; padding-top: 1px; }
.url b { font-weight: 400; color: #202124; }
.ext-p { width: 25px; height: 25px; border-radius: 4px; background: #737373; color: #fff; font: 800 19px/24px "Open Sans", sans-serif; text-align: center; }
.ext-sep { width: 3px; height: 23px; border-radius: 1px; background: #ffac40; }
.profile { width: 30px; height: 30px; border-radius: 50%; background: #7e57c2; color: #fff; font-size: 15px; line-height: 28px; text-align: center; }
.bookmarks { height: 42px; display: grid; align-items: center; padding-left: 19px; font-size: 16.9px; color: #202124; grid-template-columns: 32px 71px 48px 33px 94px 32px 69px 33px 100px 31px 198px 31px 198px 33px 190px 22px; }
.bookmarks .u-logo { margin-top: 3px; }

/* viewport */
.viewport { height: 826px; flex: none; display: flex; overflow: hidden; background: #fff; }
.page { width: 1895px; }
.gh-head { height: 156px; background: #f6f8fa; border-bottom: 2px solid #d1d9e0; }
.gh-top { height: 96px; padding-left: 24px; display: grid; align-items: center; grid-template-columns: 72px 72px 38px 20px 757px 543px 19px 98px 60px 60px 58px 52px; }
.gh-top .label { padding-top: 2px; }
.sq { width: 48px; height: 48px; border: 1.5px solid #d1d9e0; border-radius: 9px; background: #f6f8fa; display: flex; align-items: center; justify-content: center; }
.sq.plus { width: 86px; justify-content: flex-start; padding-left: 15px; gap: 21px; }
.sq.plus .caret { margin-top: 3px; }
.mark { fill: #1f2328; }
.slash { color: #59636e; }
.crumb { font-size: 19.85px; font-weight: 600; }
.gh-search { width: 525px; height: 47px; border: 1.5px solid #d1d9e0; border-radius: 9px; display: flex; align-items: center; color: #59636e; padding-left: 11px; }
.gh-search .oct { margin-right: 11px; }
.gh-search .label:nth-of-type(1) { width: 49px; }
kbd { width: 18px; height: 24px; border: 1.5px solid #59636e; border-radius: 4px; font: 17px/21px "Open Sans", sans-serif; text-align: center; margin: 5px 6px 0 0; }
.cmd { margin-left: auto; width: 48px; height: 24px; border-left: 1px solid #d1d9e0; padding-left: 14px; display: flex; align-items: center; }
.gh-sep { width: 1px; height: 30px; background: #d1d9e0; }
.caret { width: 0; height: 0; border: 6px solid transparent; border-top: 7px solid #59636e; border-bottom: 0; }
.caret.dark { border-top-color: #3d444d; }
.gh-nav { height: 60px; padding-left: 36px; display: grid; grid-template-columns: 121px 129px 236px 143px 146px 116px 148px 146px 140px; }
.gh-nav a { display: flex; align-items: center; gap: 13px; height: 49px; }
.gh-nav .label { padding-top: 2px; }
.gh-nav .current { font-weight: 600; width: 110px; height: 60px; margin-left: -12px; padding: 0 0 8px 12px; gap: 12px; border-bottom: 3px solid #fd8c73; }
.count { width: 30px; height: 29px; border-radius: 15px; background: #e7ebf0; font-size: 17px; font-weight: 600; line-height: 28px; text-align: center; }

.title-row { height: 40px; margin: 27px 0 0 47px; display: grid; grid-template-columns: 49px 1058px 72px; align-items: center; }
h1 { font-size: 28.31px; font-weight: 600; line-height: 40px; white-space: nowrap; }
.pill { height: 29px; border: 1.5px solid #d1d9e0; border-radius: 15px; color: #59636e; font-size: 16.8px; font-weight: 600; line-height: 26px; text-align: center; }
.generated { margin: 6px 0 0 48px; height: 28px; font-size: 17px; line-height: 27px; letter-spacing: -.03px; color: #59636e; }
.generated a { color: #0969da; text-decoration: underline; text-underline-offset: 5px; text-decoration-thickness: 1px; margin-left: 1px; }

.btn { border: 1.5px solid #d1d9e0; border-radius: 9px; background: #f6f8fa; display: flex; align-items: center; font-weight: 600; white-space: nowrap; text-align: left; }
.actions { height: 90px; margin: 0 48px; padding: 24px 12px 0 0; display: flex; justify-content: flex-end; align-items: flex-start; gap: 12px; font-size: 16.8px; border-bottom: 1.5px solid #d1d9e0; }
.actions .btn { height: 41px; }
.watch { width: 179px; padding-left: 18px; }
.watch .label { width: 60px; margin-left: 4px; }
.count { text-align: center; }
.watch .caret { margin: 3px 0 0 11px; }
.split { width: 197px; }
.split .main { width: 147px; display: grid; grid-template-columns: 36px 44px 30px; padding-left: 18px; align-items: center; }
.split .drop { width: 47px; height: 38px; border-left: 1.5px solid #d1d9e0; display: grid; place-items: center; }
.split.star { width: 198px; }
.split.star .main { grid-template-columns: 41px 40px 30px; }

.columns { display: grid; grid-template-columns: 1319px 444px; gap: 36px; margin: 24px 0 0 48px; }
.alert { height: 167px; border: 1.5px solid #d1d9e0; border-radius: 9px; display: flex; align-items: flex-start; }
.big-branch { margin: 61px 0 0 23px; }
.alert-text { width: 903px; margin: 26px 0 0 25px; }
.alert h2 { font-size: 22.25px; font-weight: 600; line-height: 36px; }
.alert p { font-size: 19.85px; line-height: 31px; color: #59636e; margin-top: 5px; }
.alert a { color: #0969da; text-decoration: underline; text-decoration-thickness: 2px; text-underline-offset: 3px; }
.protect { width: 218px; height: 48px; justify-content: center; margin: 58px 0 0 16px; padding-top: 2px; font-size: 19.4px; box-shadow: 0 1px 1px #1f23280a; }
.dismiss { margin: 75px 0 0 28px; }
.branch-row { height: 48px; margin-top: 36px; display: flex; align-items: center; }
.branch-row .btn { height: 48px; box-shadow: 0 1px 1px #1f23280a; }
.branch-row span { padding-top: 2px; }
.main-btn { width: 157px; padding-left: 18px; gap: 10px; }
.main-btn span { width: 56px; }
.meta { display: flex; align-items: center; gap: 6px; color: #59636e; font-weight: 600; font-size: 19.2px; }
.meta .oct { margin-bottom: 1px; }
.meta.br { width: 130px; margin-left: 19px; }
.add { width: 143px; margin-left: auto; padding-left: 18px; }
.add span { width: 93px; }
.code { width: 153px; margin-left: 12px; padding-left: 18px; gap: 12px; color: #fff; border-color: #1b7a34; background: #1f883d; }
.code .oct { fill: #fff; }
.code .caret { border-top-color: #fff; margin-left: 7px; }
.files { margin-top: 24px; border: 1.5px solid #d1d9e0; border-radius: 9px 9px 0 0; overflow: hidden; height: 220px; }
.files-head { height: 79px; background: #f6f8fa; display: flex; align-items: center; justify-content: flex-end; gap: 6px; padding-right: 31px; font-size: 17px; font-weight: 600; border-bottom: 1.5px solid #d1d9e0; }
.files-head span { padding-top: 2px; }
.file { height: 61px; padding-left: 24px; display: grid; grid-template-columns: 39px 488px 587px 180px; align-items: center; border-bottom: 1.5px solid #d1d9e0; }
.file .label { padding-top: 1px; font-size: 20px; }
.folder { fill: #54aeff; }
.skel { width: 562px; height: 19px; margin-top: -2px; border-radius: 4px; background: #f6f8fa; }
.skel + .skel { width: 180px; }

.about-head { margin-top: 18px; height: 36px; display: flex; align-items: center; justify-content: space-between; }
.about h2 { font-size: 22.8px; font-weight: 600; padding-top: 3px; }
.desc { font-size: 22.6px; line-height: 36px; margin-top: 26px; white-space: nowrap; }
.desc .ls1 { letter-spacing: .42px; }
.about ul { list-style: none; margin-top: 16px; color: #59636e; }
.about li { height: 43.6px; display: flex; align-items: center; gap: 18px; }
.about li span { padding-top: 1px; }
.about b { font-weight: 600; }

.scrollbar { width: 25px; background: #f1f1f1; display: flex; flex-direction: column; align-items: center; }
.up { margin-top: 10px; border: 6px solid transparent; border-bottom: 6px solid #a3a3a3; border-top: 0; }
.thumb { margin-top: 9px; width: 21px; height: 184px; background: #c1c1c1; }
.down { margin-top: auto; margin-bottom: 9px; border: 6px solid transparent; border-top: 6px solid #505050; border-bottom: 0; }

/* taskbar */
.taskbar { height: 72px; flex: none; background: #11244f; color: #fff; display: grid; align-items: center; padding-left: 32px; font-size: 17px; grid-template-columns: 45px 433px 56px 347px 66px 65px 67px 66px 66px 66px 66px 149px 240px 103px 24px; }
.taskbar > svg:first-child { margin-top: -5px; }
.weather, .clock { display: flex; flex-direction: column; line-height: 24px; white-space: nowrap; }
.weather { margin-top: 3px; }
.weather span + span { color: #bcc4d6; font-size: 17.3px; }
.clock { width: 91px; text-align: right; margin-top: -1px; line-height: 23px; }
.badge-text { font-size: 16px; }
.badge-small { font-size: 14.5px; font-weight: 600; }
.tb-search { width: 329px; height: 48px; margin-top: 2px; border-radius: 24px; background: #2d3c64; border: 1px solid #33426a; display: grid; align-items: center; grid-template-columns: 36px 187px 86px; padding-left: 17px; color: #ccd1dc; font-size: 19.4px; }
.tb-search .label { padding-top: 1px; }
.tb-search svg:last-child { margin-top: 2px; }
.app { width: 36px; height: 60px; position: relative; display: grid; place-items: center; margin-top: 2px; }
.app::after { content: ""; position: absolute; left: 50%; bottom: 1px; width: 9px; height: 5px; margin-left: -4px; border-radius: 3px; background: #97a0b5; }
.tile { width: 61px; border-radius: 6px; margin: 2px 0 0 -13px; background: #21345c; border: 1px solid #293c64; }
.tile.active::after { width: 24px; margin-left: -12px; bottom: 0; background: #5cc8fb; }
.tile.alerting { background: #47292e; border-color: #47292e; }
.tile.alerting svg { margin: -13px 0 0 12px; }
.tile.alerting::after { background: #fb9a9e; bottom: 0; }
.tray { display: grid; align-items: center; grid-template-columns: 33px 42px 48px 35px 37px 24px; }
.notif { width: 24px; height: 24px; border-radius: 50%; background: #5fcbfc; color: #10131c; font-size: 15px; line-height: 23px; text-align: center; }
```
